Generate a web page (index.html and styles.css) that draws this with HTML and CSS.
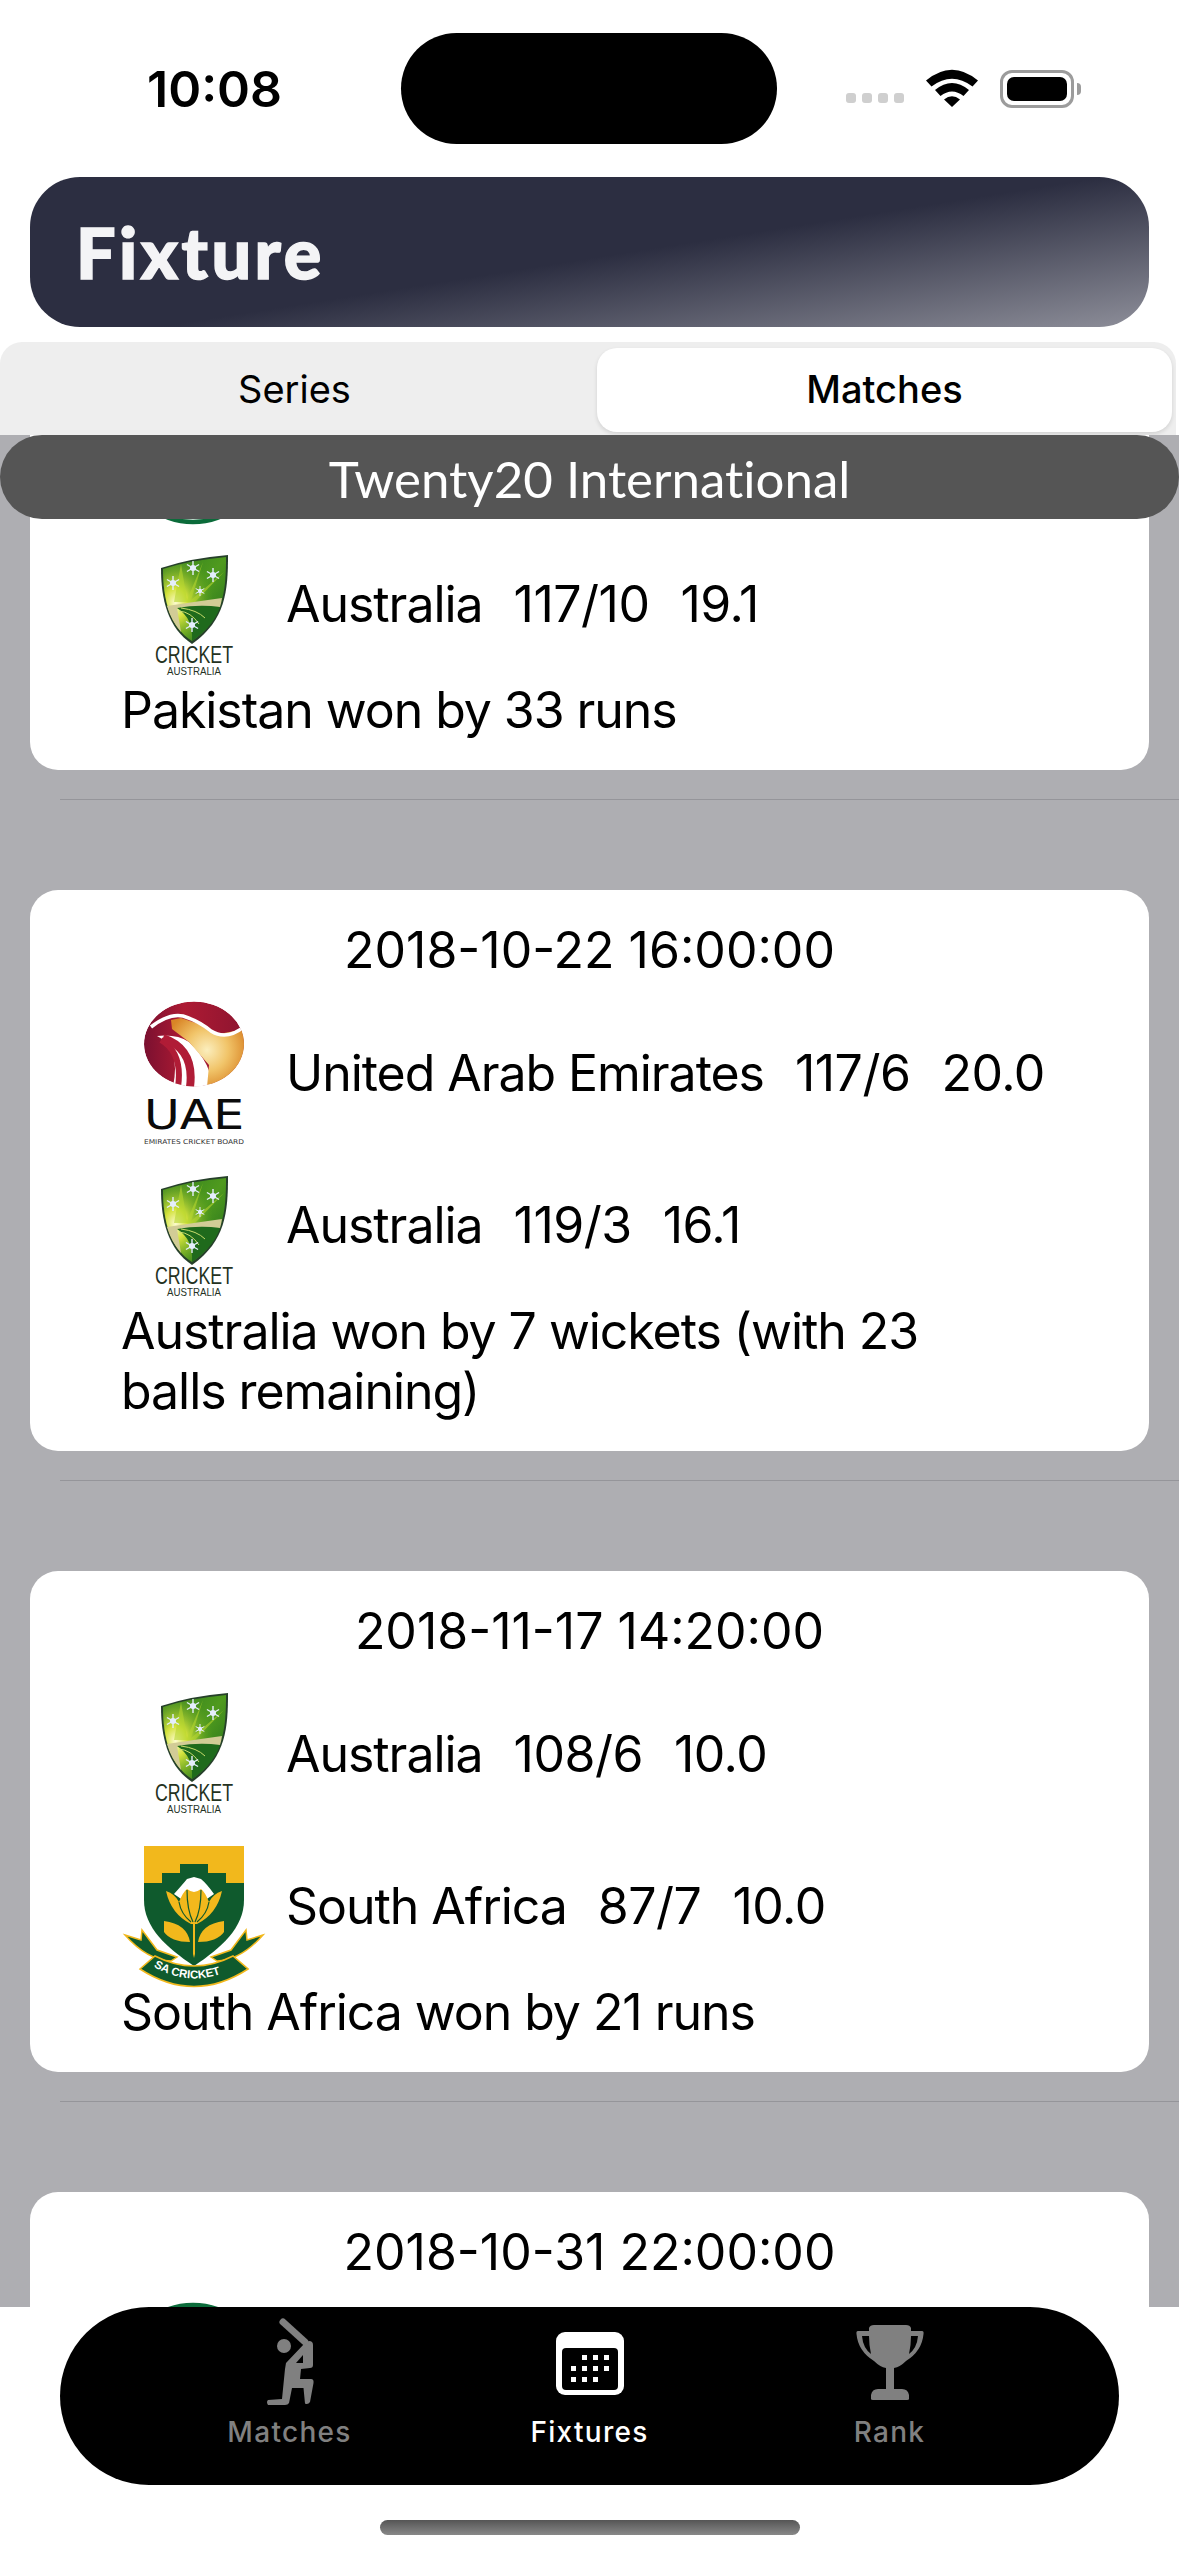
FILE: index.html
```html
<!DOCTYPE html>
<html lang="en">
<head>
    <meta charset="UTF-8">
    <title>Fixture</title>
    <link rel="stylesheet" href="styles.css">
</head>
<body>
<svg class="defs" width="0" height="0">
    <defs>
        <linearGradient id="caGreen" x1="0" y1="0" x2="1" y2="1">
            <stop offset="0" stop-color="#2f7d1f"/>
            <stop offset="0.5" stop-color="#4f9a1e"/>
            <stop offset="1" stop-color="#1f6a1c"/>
        </linearGradient>
        <radialGradient id="caSun" cx="0.2" cy="0.55" r="0.6">
            <stop offset="0" stop-color="#fdfbd0"/>
            <stop offset="0.3" stop-color="#d3e23c"/>
            <stop offset="1" stop-color="#5ea01e" stop-opacity="0"/>
        </radialGradient>
        <linearGradient id="uaeRed" x1="0" y1="0.5" x2="1" y2="0.5">
            <stop offset="0" stop-color="#7a1030"/>
            <stop offset="0.4" stop-color="#ad1a33"/>
            <stop offset="1" stop-color="#8e1530"/>
        </linearGradient>
        <radialGradient id="uaeGold" gradientUnits="userSpaceOnUse" cx="86" cy="53" r="42">
            <stop offset="0" stop-color="#fbeebd"/>
            <stop offset="0.5" stop-color="#f1c469"/>
            <stop offset="1" stop-color="#d98526"/>
        </radialGradient>
        <clipPath id="uaeClip">
            <ellipse cx="73" cy="47" rx="50" ry="42.5"/>
        </clipPath>
        <symbol id="star" viewBox="-6 -6 12 12">
            <path d="M0-6V6M-5.2-3 5.2 3M-5.2 3 5.2-3" stroke="#e4eefc" stroke-width="1.2"/>
            <circle r="2.6" fill="#e4eefc"/>
        </symbol>
        <symbol id="logoAus" viewBox="0 0 146 152">
            <path d="M40 28Q70 18 107 15C107 50 105 80 71 104C47 88 40 60 40 28Z" fill="#26402a"/>
            <path d="M42 29Q70 20 105 17C105 50 103 79 71 101C49 87 42 60 42 29Z" fill="url(#caGreen)"/>
            <path d="M42 29Q70 20 105 17C105 50 103 79 71 101C49 87 42 60 42 29Z" fill="url(#caSun)"/>
            <path d="M53 62 60 24 66 60 82 22 70 60 103 32 74 62Z" fill="#b6d62e" opacity=".6"/>
            <path d="M46 66Q72 62 101 58 100 64 99 67Q74 66 56 68L60 92Q50 80 46 66Z" fill="#d2cc96"/>
            <path d="M56 68Q78 64 99 67C95 80 84 92 71 101C72 86 68 76 56 68Z" fill="#1f6a1c"/>
            <path d="M58 71Q70 72 78 84M60 68Q76 70 84 78" fill="none" stroke="#c9dc6c" stroke-width="1"/>
            <use href="#star" x="65" y="21" width="14" height="14"/>
            <use href="#star" x="45" y="36" width="14" height="14"/>
            <use href="#star" x="85" y="28" width="14" height="14"/>
            <use href="#star" x="74" y="46" width="10" height="10"/>
            <use href="#star" x="64" y="78" width="14" height="14"/>
            <text class="logo-text" x="34" y="123" font-size="24" textLength="78" lengthAdjust="spacingAndGlyphs" fill="#24321f">CRICKET</text>
            <text class="logo-text" x="46" y="135" font-size="11" textLength="54" lengthAdjust="spacingAndGlyphs" fill="#24321f">AUSTRALIA</text>
        </symbol>
        <symbol id="logoUae" viewBox="0 0 146 152">
            <g clip-path="url(#uaeClip)">
                <ellipse cx="73" cy="47" rx="50" ry="42.5" fill="url(#uaeRed)"/>
                <path d="M36 39Q60 50 52 90H90Q92 68 68 45Q56 37 36 39Z" fill="#fff"/>
                <path d="M50 23 60 21 78 27 98 37 124 32V90H86L88 68 68 45 51 32Z" fill="url(#uaeGold)"/>
                <path d="M30 30Q48 16 62 19Q78 24 90 34Q106 44 124 29" fill="none" stroke="#fff" stroke-width="3.5"/>
                <path d="M40 43Q62 56 57 90" fill="none" stroke="#b01c36" stroke-width="6"/>
                <path d="M42 41Q74 52 69 90" fill="none" stroke="#b01c36" stroke-width="8"/>
            </g>
            <text class="logo-text logo-thin" x="23" y="132" font-size="41" textLength="100" lengthAdjust="spacingAndGlyphs" fill="#0b0b0b">UAE</text>
            <text class="logo-text logo-thin" x="23" y="147" font-size="6.5" textLength="100" lengthAdjust="spacingAndGlyphs" fill="#333">EMIRATES CRICKET BOARD</text>
        </symbol>
        <symbol id="logoSa" viewBox="0 0 146 152">
            <path d="M23 4H123V58C123 86 100 106 73 124C46 106 23 86 23 58Z" fill="#0f5a2d"/>
            <path d="M23 4H123V41H105V31H87V22H59V31H41V41H23Z" fill="#f2b81c"/>
            <path d="M53 52Q62 42 66 37L73 35 80 37Q86 42 93 52L73 66Z" fill="#fff"/>
            <path d="M45 49Q50 72 70 82H76Q96 72 101 49Q92 52 88 60Q84 50 80 47Q76 50 73 50Q70 50 66 47Q62 50 58 60Q54 52 45 49Z" fill="#f2b81c"/>
            <path d="M58 60Q60 72 70 80M88 60Q86 72 76 80M66 48Q66 68 72 80M80 48Q80 68 74 80" fill="none" stroke="#0f5a2d" stroke-width="1.2"/>
            <path d="M72 82H74V112L73 116 72 112Z" fill="#f2b81c"/>
            <path d="M43 79Q66 82 69 100Q50 100 43 90ZM103 79Q80 82 77 100Q96 100 103 90Z" fill="#f2b81c"/>
            <path d="M4 93 20 98 21 88 36 108 56 115 50 119Q26 118 4 93ZM142 93 126 98 125 88 110 108 90 115 96 119Q120 118 142 93Z" fill="#0f5a2d" stroke="#f2b81c" stroke-width="1.5"/>
            <path d="M19 127 34 114Q73 134 112 114L127 127Q73 162 19 127Z" fill="#0f5a2d" stroke="#f2b81c" stroke-width="1.6"/>
            <path id="saArc" d="M30 123Q73 150 118 123" fill="none"/>
            <text class="logo-text" font-size="11.5" font-weight="700" fill="#fff"><textPath href="#saArc" startOffset="3">SA CRICKET</textPath></text>
        </symbol>
        <symbol id="logoPak" viewBox="0 0 146 152">
            <circle cx="72" cy="76" r="70" fill="none" stroke="#0b6b3a" stroke-width="4.5"/>
        </symbol>
    </defs>
</svg>

<div class="status">
    <div class="time">10:08</div>
    <div class="island"></div>
    <div class="sys">
        <div class="cell"><i></i><i></i><i></i><i></i></div>
        <svg class="wifi" width="52" height="38" viewBox="0 0 52 38">
            <path d="M0 11.500Q26-10 52 11.500L46.500 17.500Q26 2 5.500 17.500Z"/>
            <path d="M9 21Q26 7 43 21L37.500 27Q26 18 14.500 27Z"/>
            <path d="M18 30.500Q26 24 34 30.500L26 38Z"/>
        </svg>
        <div class="battery"><div class="battery-fill"></div></div>
        <div class="battery-nub"></div>
    </div>
</div>

<div class="title-bar"><h1>Fixture</h1></div>

<div class="segment">
    <div class="seg-item">Series</div>
    <div class="seg-item on">Matches</div>
</div>

<div class="list">
    <div class="banner">Twenty20 International</div>
    <div class="cards">
        <div class="card card-top">
            <div class="team"><svg class="logo"><use href="#logoPak"/></svg></div>
            <div class="team">
                <svg class="logo"><use href="#logoAus"/></svg>
                <span class="name">Australia</span><span class="score">117/10</span><span class="score">19.1</span>
            </div>
            <div class="result">Pakistan won by 33 runs</div>
        </div>
        <div class="sep"></div>
        <div class="card">
            <div class="date">2018-10-22 16:00:00</div>
            <div class="team">
                <svg class="logo"><use href="#logoUae"/></svg>
                <span class="name">United Arab Emirates</span><span class="score">117/6</span><span class="score">20.0</span>
            </div>
            <div class="team">
                <svg class="logo"><use href="#logoAus"/></svg>
                <span class="name">Australia</span><span class="score">119/3</span><span class="score">16.1</span>
            </div>
            <div class="result">Australia won by 7 wickets (with 23 balls remaining)</div>
        </div>
        <div class="sep"></div>
        <div class="card">
            <div class="date">2018-11-17 14:20:00</div>
            <div class="team">
                <svg class="logo"><use href="#logoAus"/></svg>
                <span class="name">Australia</span><span class="score">108/6</span><span class="score">10.0</span>
            </div>
            <div class="team">
                <svg class="logo"><use href="#logoSa"/></svg>
                <span class="name">South Africa</span><span class="score">87/7</span><span class="score">10.0</span>
            </div>
            <div class="result">South Africa won by 21 runs</div>
        </div>
        <div class="sep"></div>
        <div class="card">
            <div class="date">2018-10-31 22:00:00</div>
            <div class="team"><svg class="logo"><use href="#logoPak"/></svg></div>
        </div>
    </div>
</div>

<div class="tabbar">
    <div class="tabs">
        <div class="tab">
            <svg class="tab-icon" width="60" height="90" viewBox="0 0 60 90">
                <g transform="translate(9 0)">
                    <path d="M14 3 36 23" stroke="#808080" stroke-width="7" stroke-linecap="round" fill="none"/>
                    <circle cx="15" cy="27" r="7"/>
                    <path fill-rule="evenodd" d="M35 25 40 22Q44 22 44 26V46Q44 49 41 49L32 50 31 60H42Q45 60 44.500 64L41 83Q39 86 36 84.500L34.500 69H23L20 84Q19 86 16 86H-1Q-3 83 -1 81L13 80 16 50 17 44Z M34 36 27 44 34 44Z"/>
                </g>
            </svg>
            <div class="tab-label">Matches</div>
        </div>
        <div class="tab on">
            <svg class="tab-icon" width="68" height="90" viewBox="0 0 68 90">
                <rect x="0" y="13" width="68" height="63" rx="9" fill="#fff"/>
                <rect x="6" y="29" width="56" height="42" rx="4" fill="#000"/>
                <g fill="#fff">
                    <rect x="26" y="36" width="5" height="5"/><rect x="37" y="36" width="5" height="5"/><rect x="48" y="36" width="5" height="5"/>
                    <rect x="15" y="47" width="5" height="5"/><rect x="26" y="47" width="5" height="5"/><rect x="37" y="47" width="5" height="5"/><rect x="48" y="47" width="5" height="5"/>
                    <rect x="15" y="58" width="5" height="5"/><rect x="26" y="58" width="5" height="5"/><rect x="37" y="58" width="5" height="5"/>
                </g>
            </svg>
            <div class="tab-label">Fixtures</div>
        </div>
        <div class="tab">
            <svg class="tab-icon" width="68" height="90" viewBox="0 0 68 90">
                <path transform="translate(0 2)" fill-rule="evenodd" d="M13 7Q14 4 18 4H50Q54 4 55 7V10H66Q68 10 67.500 13Q66 30 50 40Q44 46 38 47V68H46Q52 68 53 74V78Q53 79 51 79H17Q15 79 15 78V74Q16 68 22 68H30V47Q24 46 18 40Q2 30 .500 13Q0 10 2 10H13ZM6 15Q7 27 15 33 13 24 13 15ZM62 15H55Q55 24 53 33 61 27 62 15Z"/>
            </svg>
            <div class="tab-label">Rank</div>
        </div>
    </div>
    <div class="home"></div>
</div>
</body>
</html>
```

FILE: styles.css
```css
* {
    margin: 0;
    padding: 0;
    box-sizing: border-box;
}

html, body {
    width: 1179px;
    height: 2556px;
    overflow: hidden;
    background: #fff;
}

body {
    display: flex;
    flex-direction: column;
    font-family: Inter, "Liberation Sans", sans-serif;
    color: #000;
}

.defs {
    position: absolute;
}

/* status bar */
.status {
    display: grid;
    grid-template-columns: 401px 376px 1fr;
    align-items: center;
    height: 111px;
    margin: 33px 0;
    flex: none;
}

.time {
    padding-left: 147px;
    font-size: 50px;
    font-weight: 600;
    line-height: 56px;
}

.island {
    height: 111px;
    background: #000;
    border-radius: 56px;
}

.sys {
    display: flex;
    align-items: center;
    padding-left: 69px;
}

.cell {
    display: flex;
    gap: 6px;
    margin-top: 19px;
    margin-right: 22px;
}

.cell i {
    width: 10px;
    height: 10px;
    border-radius: 3px;
    background: #cfcfcf;
}

.wifi {
    margin-right: 22px;
    margin-top: -1px;
}

.battery {
    width: 74px;
    height: 38px;
    padding: 4px;
    border: 3px solid #9c9c9c;
    border-radius: 12px;
}

.battery-fill {
    height: 100%;
    background: #000;
    border-radius: 7px;
}

.battery-nub {
    width: 4px;
    height: 12px;
    margin-left: 3px;
    background: #9c9c9c;
    border-radius: 0 4px 4px 0;
}

.wifi path {
    fill: #000;
}

/* title */
.title-bar {
    flex: none;
    height: 150px;
    margin: 0 30px;
    padding: 35px 46px 0;
    border-radius: 50px;
    background: linear-gradient(171deg, #2c2e41 0%, #2c2e41 52%, #8d8e99 100%);
}

.title-bar h1 {
    font-family: Lato, "Liberation Sans", sans-serif;
    font-weight: 900;
    font-size: 70px;
    line-height: 80px;
    letter-spacing: 3.5px;
    color: #f4f4f6;
    -webkit-text-stroke: 1.5px #f4f4f6;
}

/* segment */
.segment {
    flex: none;
    display: grid;
    grid-template-columns: 597px 575px;
    width: 1176px;
    height: 93px;
    margin-top: 15px;
    padding: 6px 0 3px;
    background: #eeeeee;
    border-radius: 22px 22px 0 0;
}

.seg-item {
    display: flex;
    align-items: center;
    justify-content: center;
    padding: 0 8px 2px 0;
    font-size: 38px;
}

.seg-item.on {
    padding-right: 0;
    background: #fff;
    border-radius: 20px;
    font-weight: 500;
    box-shadow: 0 2px 4px rgba(0, 0, 0, .12);
}

/* list */
.list {
    flex: 1;
    min-height: 0;
    overflow: hidden;
    background: #aeaeb2;
}

.banner {
    position: relative;
    z-index: 1;
    height: 84px;
    border-radius: 42px;
    background: #555555;
    color: #fff;
    font-family: Lato, "Liberation Sans", sans-serif;
    font-size: 51px;
    font-variant-ligatures: none;
    line-height: 88px;
    text-align: center;
}

.cards {
    padding: 0 30px;
}

.card {
    padding: 30px 120px 30px 91px;
    background: #fff;
    border-radius: 28px;
    font-size: 50px;
    line-height: 60px;
}

.card-top {
    margin-top: -143px;
    padding-top: 0;
}

.date {
    margin: 0 -90px 17px -61px;
    text-align: center;
}

.team {
    display: flex;
    align-items: center;
    gap: 31px;
    height: 152px;
    margin-right: -100px;
    white-space: nowrap;
}

.name, .result {
    letter-spacing: -1.05px;
}

.score {
    letter-spacing: -.5px;
}

.logo {
    flex: none;
    width: 146px;
    height: 152px;
    margin-right: -12px;
}

.team + .team .logo {
    margin-top: 24px;
}

.logo-text {
    font-family: "Liberation Sans", sans-serif;
}

.logo-thin {
    font-family: "DejaVu Sans", sans-serif;
}

.sep {
    height: 1px;
    margin: 29px -30px 90px 30px;
    background: #95959a;
}

/* tab bar */
.tabbar {
    flex: none;
    height: 249px;
    background: #fff;
}

.tabs {
    display: grid;
    grid-template-columns: repeat(3, 300px);
    justify-content: center;
    height: 178px;
    margin: 0 60px;
    border-radius: 89px;
    background: #000;
}

.tab {
    display: flex;
    flex-direction: column;
    align-items: center;
    padding-top: 12px;
    color: #808080;
}

.tab.on {
    color: #fff;
}

.tab-icon {
    fill: #808080;
    overflow: visible;
}

.tab-label {
    margin-top: 6px;
    font-size: 28px;
    font-weight: 500;
    line-height: 34px;
    letter-spacing: 1.3px;
}

.home {
    width: 420px;
    height: 15px;
    margin: 35px auto 0;
    border-radius: 8px;
    background: linear-gradient(#555, #888);
}
```
